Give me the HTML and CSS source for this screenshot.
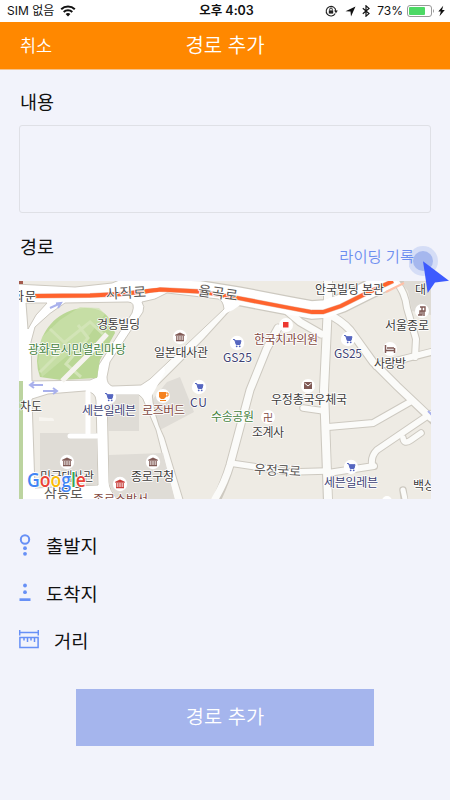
FILE: index.html
```html
<!DOCTYPE html>
<html lang="ko">
<head>
<meta charset="utf-8">
<title>경로 추가</title>
<link rel="stylesheet" href="styles.css">
</head>
<body>
<div class="status">
  <div class="status-left"><span>SIM 없음</span>
    <svg width="16" height="12" viewBox="0 0 16 12"><path d="M1.2 4.3a9.7 9.7 0 0 1 13.6 0M3.7 7a6.2 6.2 0 0 1 8.6 0" fill="none" stroke="#111" stroke-width="2"/><path d="M5.6 9.1a3.5 3.5 0 0 1 4.8 0L8 11.6z" fill="#111"/></svg>
  </div>
  <div class="status-time">오후 4:03</div>
  <div class="status-right">
    <svg class="lock" width="13" height="12" viewBox="0 0 13 12"><path d="M10.2 8.5A4.8 4.8 0 1 1 10.8 6" fill="none" stroke="#222" stroke-width="1.1"/><path d="M9 5.5h3.8L11 8.2z" fill="#222"/><path d="M3.8 5.4h4.4v3.2H3.8z" fill="#222"/><path d="M4.7 5.5V4.3a1.3 1.3 0 0 1 2.6 0v1.2" fill="none" stroke="#222"/></svg>
    <svg class="arrow" width="11" height="11" viewBox="0 0 11 11"><path d="M10.5.5 6 10.5 5.5 5.6.5 5.2z" fill="#111"/></svg>
    <svg class="bt" width="8" height="12" viewBox="0 0 8 12"><path d="M.8 3.3 7 8.6 4 11.2V.8L7 3.4.8 8.7" fill="none" stroke="#111" stroke-width="1.2"/></svg>
    <span>73%</span>
    <svg class="battery" width="28" height="12" viewBox="0 0 28 12"><rect x=".5" y=".5" width="24" height="11" rx="2.5" fill="#fff" stroke="#999"/><rect x="2" y="2" width="16" height="8" rx="1" fill="#4cd964"/><path d="M26 4q2 2 0 4z" fill="#999"/></svg>
    <svg class="bolt" width="7" height="12" viewBox="0 0 7 12"><path d="M5.2.8.3 6.6h2.5L1.5 11.2 6.8 5H4.1z" fill="#111"/></svg>
  </div>
</div>
<header class="nav"><span class="cancel">취소</span><h1>경로 추가</h1></header>
<main class="page">
  <h2 class="label">내용</h2>
  <div class="memo"></div>
  <div class="route-head">
    <h2 class="label">경로</h2>
    <div class="record">
      <svg class="pointer" width="41" height="48" viewBox="0 0 41 48"><circle cx="14" cy="15" r="15" fill="#cbd6f4" opacity=".75"/><circle cx="14" cy="15" r="10" fill="#a5b7ee"/><path d="M14 15.300 40 34.700 26 36.500 18.700 47z" fill="#3d5afe"/></svg>
      <span class="record-text">라이딩 기록</span>
    </div>
  </div>
  <svg class="map" width="412" height="218" viewBox="19 281 412 218">
    <defs>
      <g id="cart"><circle r="7.200" fill="#fff"/><path d="M-4-3.500h1.700l1.500 5H3l1-3.800h-6" fill="#5566c0" stroke="#5566c0"/><circle cx="-.3" cy="3.300" r=".9" fill="#5566c0"/><circle cx="2.700" cy="3.300" r=".9" fill="#5566c0"/></g>
      <g id="hall"><circle r="7.200" fill="#fff"/><path d="M-4.800-2.200 0-4.500l4.800 2.300v1h-9.600zM-4 3h8v1.300h-8z" fill="currentColor"/><path d="M-3.200-1v4M-1.100-1v4M1.100-1v4M3.200-1v4" stroke="currentColor" stroke-width="1.200"/></g>
      <g id="lanes">
        <path d="M328 281V305L324 390 328 499" stroke-width="8"/>
        <path d="M326 313Q341 320 350 330L373 362 397 386 431 418" stroke-width="7"/>
        <path d="M328 427 373 423 410 402" stroke-width="6"/>
        <path d="M430 414 377 450Q371 456 372 464M328 473 374 466" stroke-width="6"/>
        <path d="M403 438Q404 445 411 440L421 433" stroke-width="5.500"/>
        <path d="M303 408 324 411M230 463 290 472 327 471" stroke-width="5.500"/>
        <path d="M278 328 267 348 250 390 230 465Q225 482 215 499" stroke-width="7"/>
        <path d="M286 310 300 322 321 334" stroke-width="7"/>
        <path d="M395 281Q405 291 407 308L416 339 415 357M376 366 431 352" stroke-width="6"/>
        <path d="M403 490 405 499" stroke-width="5"/>
        <path d="M232 300 200 335 150 385" stroke-width="10"/>
        <path d="M147 388Q149 418 160 439L180 505" stroke-width="8"/>
      </g>
      <path id="main" d="M15 294 80 295 122 294 160 289 200 290 238 296 290 306 312 310 325 309 342 303 368 290 395 277"/>
    </defs>
    <path d="M19 281h412v218H19z" fill="#eeebe4"/>
    <path d="M400 281h31v34l-19-4-4-20z" fill="#dedbd5"/>
    <path d="M182 321 204 337 187 355 165 337zM167 382 180 377 194 412 160 430 149 404z" fill="#dfdcd6"/>
    <g fill="none" stroke="#cdc9c0" stroke-linecap="round">
      <path d="M328 277V305L324 390 328 503" stroke-width="10"/>
      <path d="M326 313Q341 320 350 330L373 362 397 386 435 422" stroke-width="9"/>
      <path d="M328 427 373 423 410 402M430 414 377 450Q371 456 372 464M328 473 374 466M395 281Q405 291 407 308L416 339 415 357M376 366 435 351" stroke-width="8"/>
      <path d="M403 438Q404 445 411 440L421 433M303 408 324 411M230 463 290 472 327 471M403 490 405 503" stroke-width="7.500"/>
      <path d="M278 328 267 348 250 390 230 465Q225 482 215 503M286 310 300 322 321 334" stroke-width="9"/>
      <path d="M232 300 200 335 150 385" stroke-width="12"/>
      <path d="M147 388Q149 418 160 439L180 505" stroke-width="10"/>
      <use href="#main" stroke-width="20"/>
    </g>
    <use href="#lanes" fill="none" stroke="#fbfbf9" stroke-linecap="round"/>
    <use href="#main" fill="none" stroke="#fff" stroke-width="17.500"/>
    <path d="M19 281H155V300L165 372 146 406 171 499H19z" fill="#fff"/>
    <path d="M220 298H250L233 310 224 314z" fill="#fff"/>
    <g fill="#eeebe4" stroke="#cdc9c0">
      <path d="M15 279H122L112 283 75 287 15 284z"/>
      <path d="M26 303H47L36 315 28 329z"/>
      <path d="M65 303Q50 312 35 327L31 342 32 381 90 380 97 377 98 366 132 313Q136 302 128 302z"/>
      <path d="M155 299 167 293 218 299Q223 300 224 309L150 379 141 385 112 386Q107 384 107 377L110 362 143 312Q145 306 142 302z"/>
      <path d="M32 399 48 394 85 391Q96 392 96 401L98 485 35 488z"/>
      <path d="M107 395 139 395Q143 397 145 404L156 430 174 500H118Q109 490 109 482z"/>
    </g>
    <path d="M19 381H23V499H19z" fill="#bcd4a0"/>
    <path d="M39 417 49 418Q54 417 54 421H39z" fill="#f7f5f0"/>
    <path d="M40 433H97V485H40zM108 395H139V431H108zM109 455 163 453 175 500H117L109 484z" fill="#dfdcd6"/>
    <path d="M88 392V435M70 436H97" stroke="#fff" stroke-width="5" stroke-linecap="round"/>
    <path d="M40 377Q34 361 40 345C45 323 65 308 85 308Q104 307 112 323L115 333 100 360 97 378 61 380z" fill="#bad795"/>
    <path d="M42 337 60 320 80 307 99 308 105 314 85 341 68 355 42 377 38 362z" fill="#cce2ae" opacity=".65"/>
    <path d="M50 329 67 345 40 372M65 342 90 322 103 334M78 325 88 338 66 364 81 377" fill="none" stroke="#d2e4b6" stroke-width="3"/>
    <path d="M62 381 88 355 107 334" fill="none" stroke="#f5f3ee" stroke-width="5"/>
    <g stroke="#a9b1ec" stroke-width="2" fill="none"><path d="M50 308 61 303M56 303.500l5-.5-3 5M43 385H30M34 382l-4 3 4 3M43 391H57M53 388l4 3-4 3M428 411l5 5"/></g>
    <path d="M35 296 90 295.500 122 294Q150 291 160 289.500L200 291.500 238 298 290 308 312 312 323 312 341 306 367 293 393 281" fill="none" stroke="#c94b20" stroke-width="4.800" opacity=".35"/>
    <path d="M35 296 90 295.500 122 294Q150 291 160 289.500L200 291.500 238 298 290 308 312 312 323 312 341 306 367 293 393 281" fill="none" stroke="#ff632d" stroke-width="3.800"/>
    <path d="M386 292 404 283" stroke="#ffc0a8" stroke-width="2"/>
    <use href="#hall" x="180" y="337" color="#805a55"/>
    <use href="#hall" x="67" y="462" color="#805a55"/>
    <use href="#hall" x="153" y="462" color="#805a55"/>
    <use href="#hall" x="120" y="484" color="#c93c38"/>
    <use href="#cart" x="237" y="343"/><use href="#cart" x="348" y="339"/><use href="#cart" x="199" y="387"/><use href="#cart" x="109" y="397"/><use href="#cart" x="351" y="467"/>
    <g fill="#fff"><circle cx="286" cy="325" r="7"/><circle cx="422" cy="311" r="7"/><circle cx="390" cy="349" r="7"/><circle cx="308" cy="386" r="7"/><circle cx="163" cy="396" r="7"/><circle cx="268" cy="417" r="7"/><circle cx="387" cy="501" r="5"/></g>
    <path d="M283 322h5.500v5.500H283z" fill="#ed3932"/>
    <path d="M304 382h8v7h-8z" fill="#805a55"/><path d="m304.500 383 3.500 3 3.500-3" fill="none" stroke="#fff"/>
    <path d="M385.500 345v8M394.500 348v5M385 350.500h10M387 348h7" stroke="#805a55" stroke-width="1.500"/>
    <path d="M159 392h7v5l-2 2h-3l-2-2z" fill="#f58220"/><path d="M166 393h2v3h-2M160 400.500h6" fill="none" stroke="#f58220"/>
    <path d="M420 307h5v4h-5v4h-2M424 311v5M422 307v8h-4" fill="none" stroke="#805a55" stroke-width="1.400"/>
    <text x="263" y="421" class="m brown temple">卍</text>
    <path d="M19 281h4v3h-4z" fill="#a45a4c"/>
    <g class="m">
      <text x="13" y="300.500" textLength="23">화문</text>
      <text x="106" y="298" textLength="40" transform="rotate(-3 126 292)" class="road">사직로</text>
      <text x="198" y="298" textLength="40" transform="rotate(8 218 293)" class="road">율곡로</text>
      <text x="315" y="293.500" textLength="69">안국빌딩 본관</text>
      <text x="415" y="293.500">대</text>
      <text x="97" y="329" textLength="43">경통빌딩</text>
      <text x="28" y="354" textLength="98" class="green">광화문시민열린마당</text>
      <text x="154" y="357" textLength="54">일본대사관</text>
      <text x="223" y="362" textLength="29" class="blue">GS25</text>
      <text x="254" y="344" textLength="64" class="brown">한국치과의원</text>
      <text x="334" y="358" textLength="28" class="blue">GS25</text>
      <text x="385" y="330" textLength="44">서울종로</text>
      <text x="374" y="368" textLength="32">사랑방</text>
      <text x="20" y="411" textLength="22">차도</text>
      <text x="82" y="415" textLength="54" class="blue">세븐일레븐</text>
      <text x="142" y="415" textLength="43" class="brown">로즈버드</text>
      <text x="190" y="407" textLength="17" class="blue">CU</text>
      <text x="211" y="421" textLength="43" class="green">수송공원</text>
      <text x="271" y="404" textLength="76">우정총국우체국</text>
      <text x="252" y="437" textLength="32">조계사</text>
      <text x="254" y="475" textLength="47" class="road small" transform="rotate(3 277 470)">우정국로</text>
      <text x="324" y="487" textLength="54" class="blue">세븐일레븐</text>
      <text x="413" y="490" textLength="22">백상</text>
      <text x="40" y="481" textLength="54">미국대사관</text>
      <text x="131" y="481" textLength="43">종로구청</text>
      <text x="44" y="498" textLength="39" class="road">삼봉로</text>
      <text x="93" y="503.500" textLength="55" class="brown">종로소방서</text>
    </g>
    <text x="27" y="487" textLength="59" lengthAdjust="spacingAndGlyphs" class="google"><tspan fill="#4285f4">G</tspan><tspan fill="#ea4335">o</tspan><tspan fill="#fbbc05">o</tspan><tspan fill="#4285f4">g</tspan><tspan fill="#34a853">l</tspan><tspan fill="#ea4335">e</tspan></text>
  </svg>
  <ul class="facts">
    <li><svg width="12" height="22" viewBox="0 0 12 22"><circle cx="6" cy="5.500" r="4.200" fill="none" stroke="#6790f6" stroke-width="2"/><circle cx="6" cy="14.200" r="1.900" fill="#6790f6"/><circle cx="6" cy="19.800" r="1.900" fill="#6790f6"/></svg><span>출발지</span></li>
    <li><svg width="12" height="22" viewBox="0 0 12 22"><circle cx="6" cy="4.500" r="1.900" fill="#6790f6"/><circle cx="6" cy="11.200" r="1.900" fill="#6790f6"/><path d="M.5 17.300h11v2.700H.5z" fill="#6790f6"/></svg><span>도착지</span></li>
    <li><svg width="20" height="22" viewBox="0 0 20 22"><path d="M.7 1v5.500M19.300 1v5.500M1 3.500h18M.9 8.400h18.200v10.200H.9zM5 8.500v3M8.500 8.500v4.500M12 8.500v3M15.500 8.500v4.500" fill="none" stroke="#6790f6" stroke-width="1.500"/></svg><span>거리</span></li>
  </ul>
  <button class="submit">경로 추가</button>
</main>
</body>
</html>
```
FILE: styles.css
```css
* { box-sizing: border-box; }
body { margin: 0; background: #f2f3fb; color: #111; font-family: "Noto Sans CJK KR", "Noto Sans", sans-serif; width: 450px; height: 800px; overflow: hidden; }
.status { display: grid; grid-template-columns: 1fr auto 1fr; height: 22px; align-items: center; background: #fff; font: 12px/22px Inter, "Noto Sans CJK KR", sans-serif; padding: 0 5px 0 7px; }
.status-left, .status-right { display: flex; align-items: center; }
.status-left { gap: 6px; }
.status-time { font-weight: 600; font-size: 12.5px; padding-left: 1px; }
.status-right { justify-content: flex-end; }
.lock { margin-right: 7px; }
.arrow { margin-right: 6px; }
.bt { margin-right: 7px; }
.battery { margin: 0 3px 0 4px; }
.nav { display: grid; grid-template-columns: 1fr auto 1fr; align-items: center; height: 48px; padding: 0 20px; background: #ff8800; color: #fff; border-bottom: 1px solid #f5c28b; }
.cancel { font-size: 17.5px; font-weight: 350; line-height: 45px; padding-bottom: 2px; }
.nav h1 { margin: 0; font-size: 20px; line-height: 45px; font-weight: 350; padding-bottom: 2px; }
.page { padding: 16px 19px 0; }
.label { margin: 0 0 0 1px; font-size: 18.5px; font-weight: 400; line-height: 30px; }
.memo { height: 88px; margin-top: 9px; border: 1px solid #dfe0e6; border-radius: 3px; }
.route-head { display: flex; justify-content: space-between; height: 68px; padding-top: 18px; }
.record { position: relative; margin: 10px 17px 0 0; font-size: 15.3px; line-height: 28px; font-weight: 350; color: #6d8ef0; }
.record-text { position: relative; z-index: 2; }
.pointer { position: absolute; right: -36px; top: 5px; z-index: 1; }
.map { display: block; color: #805a55; }
.m { font-family: "Noto Sans CJK KR", sans-serif; font-size: 12px; font-weight: 400; fill: #3d3b3a; stroke: #fff; stroke-width: 1.6px; paint-order: stroke; stroke-linejoin: round; }
.road { fill: #5c5855; font-size: 14px; }
.small { font-size: 13px; }
.temple { font-size: 10px; }
.green { fill: #45823d; }
.blue { fill: #3e4274; }
.brown { fill: #83493f; }
.google { font: 600 20px "Open Sans", sans-serif; stroke: #fff; stroke-width: 2px; paint-order: stroke; }
.facts { list-style: none; margin: 22px 0 0; padding: 0; }
.facts li { display: flex; align-items: center; height: 47.5px; gap: 15px; font-size: 18.7px; }
.submit { display: block; width: 298px; height: 57px; margin: 25px 0 0 57px; padding: 0 0 3px; border: 0; background: #a5b5ed; color: #fff; font: 350 19.8px "Noto Sans CJK KR", sans-serif; }
```
